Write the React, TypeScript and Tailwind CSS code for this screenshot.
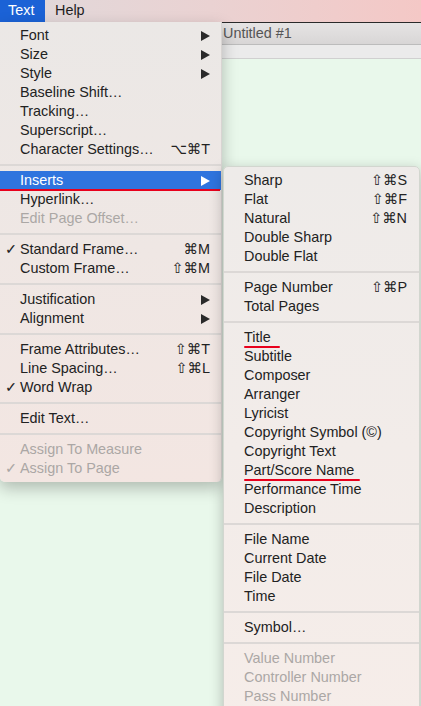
import React from 'react';

type Item =
  | { sep: true }
  | {
      sep?: false;
      label: string;
      shortcut?: string;
      arrow?: boolean;
      check?: boolean;
      disabled?: boolean;
      active?: boolean;
      mark?: number;
    };

const S: Item = { sep: true };

const textMenu: Item[] = [
  { label: 'Font', arrow: true },
  { label: 'Size', arrow: true },
  { label: 'Style', arrow: true },
  { label: 'Baseline Shift…' },
  { label: 'Tracking…' },
  { label: 'Superscript…' },
  { label: 'Character Settings…', shortcut: '⌥⌘T' },
  S,
  { label: 'Inserts', arrow: true, active: true },
  { label: 'Hyperlink…' },
  { label: 'Edit Page Offset…', disabled: true },
  S,
  { label: 'Standard Frame…', shortcut: '⌘M', check: true },
  { label: 'Custom Frame…', shortcut: '⇧⌘M' },
  S,
  { label: 'Justification', arrow: true },
  { label: 'Alignment', arrow: true },
  S,
  { label: 'Frame Attributes…', shortcut: '⇧⌘T' },
  { label: 'Line Spacing…', shortcut: '⇧⌘L' },
  { label: 'Word Wrap', check: true },
  S,
  { label: 'Edit Text…' },
  S,
  { label: 'Assign To Measure', disabled: true },
  { label: 'Assign To Page', disabled: true, check: true },
];

const insertsMenu: Item[] = [
  { label: 'Sharp', shortcut: '⇧⌘S' },
  { label: 'Flat', shortcut: '⇧⌘F' },
  { label: 'Natural', shortcut: '⇧⌘N' },
  { label: 'Double Sharp' },
  { label: 'Double Flat' },
  S,
  { label: 'Page Number', shortcut: '⇧⌘P' },
  { label: 'Total Pages' },
  S,
  { label: 'Title', mark: 36 },
  { label: 'Subtitle' },
  { label: 'Composer' },
  { label: 'Arranger' },
  { label: 'Lyricist' },
  { label: 'Copyright Symbol (©)' },
  { label: 'Copyright Text' },
  { label: 'Part/Score Name', mark: 116 },
  { label: 'Performance Time' },
  { label: 'Description' },
  S,
  { label: 'File Name' },
  { label: 'Current Date' },
  { label: 'File Date' },
  { label: 'Time' },
  S,
  { label: 'Symbol…' },
  S,
  { label: 'Value Number', disabled: true },
  { label: 'Controller Number', disabled: true },
  { label: 'Pass Number', disabled: true },
];

const Arrow: React.FC<{ white?: boolean }> = ({ white }) => (
  <svg width="9" height="10" viewBox="0 0 9 10">
    <polygon points="0,0 9,5 0,10" fill={white ? '#ffffff' : '#2a2a2a'} />
  </svg>
);

const MenuRows: React.FC<{ items: Item[]; padL: string; padR: string }> = ({ items, padL, padR }) => (
  <>
    {items.map((it, i) => {
      if (it.sep) {
        return (
          <div key={i} className="h-3 flex items-center">
            <div className="w-full h-[2px] bg-[#dcd8d6]" />
          </div>
        );
      }
      const color = it.active ? 'text-white' : it.disabled ? 'text-[#aba7a5]' : 'text-[#222222]';
      return (
        <div
          key={i}
          className={`relative h-[19px] flex items-center ${padL} ${padR} ${color} ${
            it.active ? 'bg-[#2f74de]' : ''
          }`}
        >
          {it.check && <span className="absolute left-[5px] top-0 leading-[19px]">✓</span>}
          <span className="flex-1 whitespace-nowrap leading-[19px]">{it.label}</span>
          {it.shortcut && <span className="whitespace-nowrap leading-[19px]">{it.shortcut}</span>}
          {it.arrow && <Arrow white={it.active} />}
          {it.active && <div className="absolute left-0 right-[1px] bottom-[-1px] h-[2px] bg-[#e8001c]" />}
          {it.mark && (
            <div
              className="absolute left-[20px] bottom-[-1px] h-[2px] bg-[#e8001c] rounded-full"
              style={{ width: it.mark }}
            />
          )}
        </div>
      );
    })}
  </>
);

export default function App() {
  return (
    <div
      className="relative w-[421px] h-[706px] overflow-hidden flex flex-col text-[14.4px]"
      style={{ fontFamily: '"Liberation Sans", Arial, "DejaVu Sans", sans-serif' }}
    >
      {/* menu bar */}
      <div className="h-[22px] flex items-stretch bg-gradient-to-r from-[#e0d9db] via-[#ead2d2] to-[#f4c8c6] text-[#1d1d1d]">
        <div className="w-[45px] flex items-center pl-[8px] bg-[#1b62d6] text-white">Text</div>
        <div className="flex items-center pl-[10px]">Help</div>
      </div>

      {/* document window */}
      <div className="flex-1 flex flex-col">
        <div className="h-[23px] border-t border-[#2a2a2a] border-b border-b-[#bcbcbc] bg-gradient-to-b from-[#e6e4e4] to-[#d8d6d6] flex items-center pl-[223px] text-[#555555]">
          Untitled #1
        </div>
        <div className="h-[14px] bg-[#ebebeb] border-b border-[#d0d0d0]" />
        <div className="flex-1 bg-[#e9f8eb]" />
      </div>

      {/* Text menu */}
      <div className="absolute left-0 top-[22px] w-[222px] py-[4px] rounded-b-[5px] bg-gradient-to-b from-[#ebe8e6] to-[#f3e6e2] shadow-[0_6px_16px_rgba(0,0,0,0.25)] border-r border-[#d8d4d2]">
        <MenuRows items={textMenu} padL="pl-[20px]" padR="pr-[11px]" />
      </div>

      {/* Inserts submenu */}
      <div className="absolute left-[223px] top-[166px] w-[197px] h-[560px] py-[4px] rounded-tl-[5px] rounded-tr-[5px] bg-gradient-to-b from-[#eeebe9] to-[#f6ede9] shadow-[0_4px_14px_rgba(0,0,0,0.25)] border border-[#d2d6cf]">
        <MenuRows items={insertsMenu} padL="pl-[20px]" padR="pr-[12px]" />
      </div>
    </div>
  );
}
